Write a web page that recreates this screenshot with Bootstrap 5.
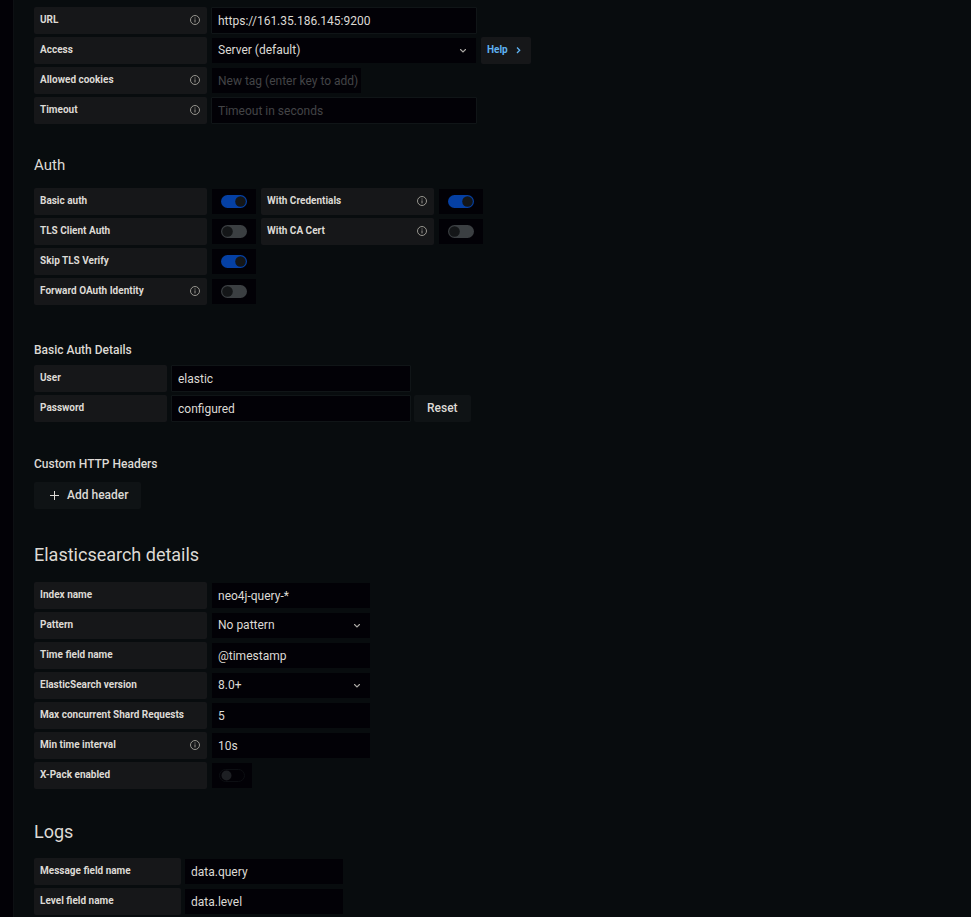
<!DOCTYPE html>
<html lang="en">
<head>
<meta charset="utf-8">
<meta name="viewport" content="width=device-width, initial-scale=1">
<title>Elasticsearch data source settings</title>
<link href="https://cdn.jsdelivr.net/npm/bootstrap@5.3.0/dist/css/bootstrap.min.css" rel="stylesheet">
<style>
  body { background: #080c0e; color: #dddad5; font: 400 12px/16px Roboto, sans-serif; }
  .side-rail { width: 14px; background: #020106; border-right: 1px solid #0d1013; }
  .settings { padding: 7px 20px 2px; }
  .settings h2, .settings h3, .settings h4 { margin: 0; font-weight: 400; }
  .settings h2 { font-size: 18px; line-height: 24px; margin: 34px 0 15px; }
  .settings .after-rows { margin: 31px 0 14px; }
  .settings h3 { font-size: 15px; line-height: 20px; margin: 31px 0 13px; }
  .settings h4 { font-size: 12px; line-height: 16px; font-weight: 500; margin: 37px 0 7px; }
  .settings .before-button { margin: 34px 0 10px; }
  .stack { display: flex; flex-direction: column; gap: 3px; }
  .field-row { display: flex; flex-wrap: wrap; gap: 4px; }
  .tight { column-gap: 3px; }
  .field-label { width: 173px; height: 27px; padding: 0 7px 1px 6px; display: flex; align-items: center; justify-content: space-between; background: #161719; border-radius: 2px; font-size: 10px; font-weight: 700; }
  .label-md { width: 147px; }
  .label-sm { width: 133px; }
  .info { width: 10px; height: 10px; fill: none; stroke: #97958f; stroke-width: 1; }
  .settings .form-control, .settings .form-select { width: 160px; height: 27px; padding: 1px 6px 0; font-size: 12px; line-height: 16px; color: #dddad5; background-color: #020106; background-clip: padding-box; border: 1px solid transparent; border-radius: 1px; }
  .settings .outlined { border-color: #101517; }
  .settings .w-wide { width: 266px; }
  .settings .w-mid { width: 240px; }
  .settings .w-tag { width: 151px; padding-right: 0; }
  .settings .form-control::placeholder { color: #434446; opacity: 1; }
  .settings .form-select { padding-top: 0; padding-bottom: 1px; background-image: url("data:image/svg+xml,%3Csvg xmlns='http://www.w3.org/2000/svg' viewBox='0 0 8 8'%3E%3Cpath d='M1.5 2.5 4 5 6.5 2.5' fill='none' stroke='%23aaa8a3' stroke-width='1.1' stroke-linecap='round'/%3E%3C/svg%3E"); background-size: 8px 8px; background-position: right 9px center; background-repeat: no-repeat; }
  .toggle-box { width: 46px; height: 27px; padding: 0; margin: 0; background: #020106; background-clip: padding-box; border: 1px solid transparent; display: flex; align-items: center; justify-content: center; min-height: 0; }
  .toggle-box.narrow { width: 42px; }
  .settings .toggle-box .form-check-input { width: 26px; height: 13px; margin: 0; float: none; border: 0; border-radius: 7px; background-color: #3b3f42; background-image: url("data:image/svg+xml,%3Csvg xmlns='http://www.w3.org/2000/svg' viewBox='0 0 13 13'%3E%3Ccircle cx='6.5' cy='6.5' r='5.3' fill='%23141618'/%3E%3C/svg%3E"); background-size: 13px 13px; background-position: left center; }
  .settings .toggle-box .form-check-input:checked { background-color: #0540a4; background-position: right center; }
  .settings .toggle-box .form-check-input:disabled { opacity: 1; background-color: #020106; border: 1px solid #0c0e12; background-size: 11px 11px; background-position: 1px center; background-image: url("data:image/svg+xml,%3Csvg xmlns='http://www.w3.org/2000/svg' viewBox='0 0 11 11'%3E%3Ccircle cx='5.5' cy='5.5' r='5' fill='%231d1f23'/%3E%3C/svg%3E"); }
  .settings .btn { height: 27px; padding: 0 13px 1px; font-size: 12px; line-height: 16px; font-weight: 500; color: #dddad5; background: #0f1315; border: 0; border-radius: 2px; }
  .settings .btn-help { padding: 0 10px 1px 6px; font-size: 10px; font-weight: 700; color: #5fb2f2; background: #161719; }
  .settings .btn-add { padding-left: 15px; }
  .icon-line { fill: none; stroke: currentColor; }
</style>
<script src="https://cdn.jsdelivr.net/npm/bootstrap@5.3.0/dist/js/bootstrap.bundle.min.js" defer></script>
</head>
<body>
<svg class="d-none" aria-hidden="true">
  <symbol id="info" viewBox="0 0 10 10"><circle cx="5" cy="5" r="4.5"/><path d="M5 4.4V7.4M5 2.5V3.5"/></symbol>
</svg>
<div class="d-flex min-vh-100">
  <div class="side-rail flex-shrink-0"></div>
  <main class="settings flex-grow-1">
    <form>
      <div class="stack">
        <div class="field-row"><label class="field-label" for="url">URL <svg class="info"><use href="#info"/></svg></label><input class="form-control outlined w-wide" id="url" type="text" value="https://161.35.186.145:9200"></div>
        <div class="field-row"><label class="field-label" for="access">Access</label><select class="form-select w-wide" id="access"><option>Server (default)</option></select><button class="btn btn-help d-flex align-items-center" type="button">Help<svg class="icon-line ms-2" width="5" height="8" viewBox="0 0 5 8" stroke-width="1.3"><path d="M1 1.5 3.7 4.2 1 7"/></svg></button></div>
        <div class="field-row"><label class="field-label" for="cookies">Allowed cookies <svg class="info"><use href="#info"/></svg></label><input class="form-control w-tag" id="cookies" type="text" placeholder="New tag (enter key to add)"></div>
        <div class="field-row"><label class="field-label" for="timeout">Timeout <svg class="info"><use href="#info"/></svg></label><input class="form-control outlined w-wide" id="timeout" type="text" placeholder="Timeout in seconds"></div>
      </div>

      <h3>Auth</h3>
      <div class="stack">
        <div class="field-row"><label class="field-label" for="basic">Basic auth</label><div class="toggle-box form-switch"><input class="form-check-input" id="basic" type="checkbox" role="switch" checked></div><label class="field-label" for="cred">With Credentials <svg class="info"><use href="#info"/></svg></label><div class="toggle-box form-switch"><input class="form-check-input" id="cred" type="checkbox" role="switch" checked></div></div>
        <div class="field-row"><label class="field-label" for="tls">TLS Client Auth</label><div class="toggle-box form-switch"><input class="form-check-input" id="tls" type="checkbox" role="switch"></div><label class="field-label" for="ca">With CA Cert <svg class="info"><use href="#info"/></svg></label><div class="toggle-box form-switch"><input class="form-check-input" id="ca" type="checkbox" role="switch"></div></div>
        <div class="field-row"><label class="field-label" for="skip">Skip TLS Verify</label><div class="toggle-box form-switch"><input class="form-check-input" id="skip" type="checkbox" role="switch" checked></div></div>
        <div class="field-row"><label class="field-label" for="oauth">Forward OAuth Identity <svg class="info"><use href="#info"/></svg></label><div class="toggle-box form-switch"><input class="form-check-input" id="oauth" type="checkbox" role="switch"></div></div>
      </div>

      <h4>Basic Auth Details</h4>
      <div class="stack">
        <div class="field-row"><label class="field-label label-sm" for="user">User</label><input class="form-control outlined w-mid" id="user" type="text" value="elastic"></div>
        <div class="field-row"><label class="field-label label-sm" for="password">Password</label><div class="field-row tight"><input class="form-control outlined w-mid" id="password" type="text" value="configured"><button class="btn" type="button">Reset</button></div></div>
      </div>

      <h4 class="before-button">Custom HTTP Headers</h4>
      <button class="btn btn-add d-flex align-items-center" type="button"><svg class="icon-line me-2" width="10" height="10" viewBox="0 0 10 10"><path d="M5.5 1V10M1 5.5H10"/></svg>Add header</button>

      <h2>Elasticsearch details</h2>
      <div class="stack">
        <div class="field-row"><label class="field-label" for="index">Index name</label><input class="form-control" id="index" type="text" value="neo4j-query-*"></div>
        <div class="field-row"><label class="field-label" for="pattern">Pattern</label><select class="form-select" id="pattern"><option>No pattern</option></select></div>
        <div class="field-row"><label class="field-label" for="time">Time field name</label><input class="form-control" id="time" type="text" value="@timestamp"></div>
        <div class="field-row"><label class="field-label" for="version">ElasticSearch version</label><select class="form-select" id="version"><option>8.0+</option></select></div>
        <div class="field-row"><label class="field-label" for="shards">Max concurrent Shard Requests</label><input class="form-control" id="shards" type="text" value="5"></div>
        <div class="field-row"><label class="field-label" for="interval">Min time interval <svg class="info"><use href="#info"/></svg></label><input class="form-control" id="interval" type="text" value="10s"></div>
        <div class="field-row"><label class="field-label" for="xpack">X-Pack enabled</label><div class="toggle-box narrow form-switch"><input class="form-check-input" id="xpack" type="checkbox" role="switch" disabled></div></div>
      </div>

      <h2 class="after-rows">Logs</h2>
      <div class="stack">
        <div class="field-row tight"><label class="field-label label-md" for="message">Message field name</label><input class="form-control" id="message" type="text" value="data.query"></div>
        <div class="field-row tight"><label class="field-label label-md" for="level">Level field name</label><input class="form-control" id="level" type="text" value="data.level"></div>
      </div>
    </form>
  </main>
</div>
</body>
</html>
